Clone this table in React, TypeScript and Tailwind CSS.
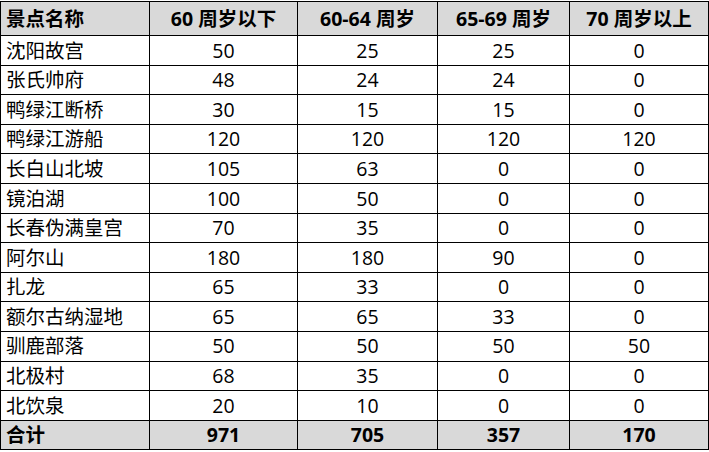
const rows: [string, number, number, number, number][] = [
  ['沈阳故宫', 50, 25, 25, 0],
  ['张氏帅府', 48, 24, 24, 0],
  ['鸭绿江断桥', 30, 15, 15, 0],
  ['鸭绿江游船', 120, 120, 120, 120],
  ['长白山北坡', 105, 63, 0, 0],
  ['镜泊湖', 100, 50, 0, 0],
  ['长春伪满皇宫', 70, 35, 0, 0],
  ['阿尔山', 180, 180, 90, 0],
  ['扎龙', 65, 33, 0, 0],
  ['额尔古纳湿地', 65, 65, 33, 0],
  ['驯鹿部落', 50, 50, 50, 50],
  ['北极村', 68, 35, 0, 0],
  ['北饮泉', 20, 10, 0, 0],
];

const headers = ['60 周岁以下', '60-64 周岁', '65-69 周岁', '70 周岁以上'];

export default function App() {
  const cell = 'border-[1.5px] border-black';
  return (
    <div className="w-[709px] h-[452px] bg-white text-black text-[19.5px] leading-none" style={{ fontFamily: '"Open Sans", "Noto Sans CJK SC", sans-serif' }}>
      <table className="border-collapse table-fixed w-[708px] mt-[1px]">
        <colgroup>
          <col className="w-[149px]" />
          <col className="w-[148px]" />
          <col className="w-[140px]" />
          <col className="w-[132px]" />
          <col className="w-[139px]" />
        </colgroup>
        <thead>
          <tr className="h-[34px] bg-[#d9d9d9] font-bold">
            <th className={`${cell} text-left pl-[5px]`}>景点名称</th>
            {headers.map(h => (
              <th key={h} className={`${cell} text-center`}>{h}</th>
            ))}
          </tr>
        </thead>
        <tbody>
          {rows.map(r => (
            <tr key={r[0]} className="h-[29.6px]">
              <td className={`${cell} text-left pl-[5px]`}>{r[0]}</td>
              {r.slice(1).map((v, i) => (
                <td key={i} className={`${cell} text-center`}>{v}</td>
              ))}
            </tr>
          ))}
          <tr className="h-[29px] bg-[#d9d9d9] font-bold">
            <td className={`${cell} text-left pl-[5px]`}>合计</td>
            <td className={`${cell} text-center`}>971</td>
            <td className={`${cell} text-center`}>705</td>
            <td className={`${cell} text-center`}>357</td>
            <td className={`${cell} text-center`}>170</td>
          </tr>
        </tbody>
      </table>
    </div>
  );
}
